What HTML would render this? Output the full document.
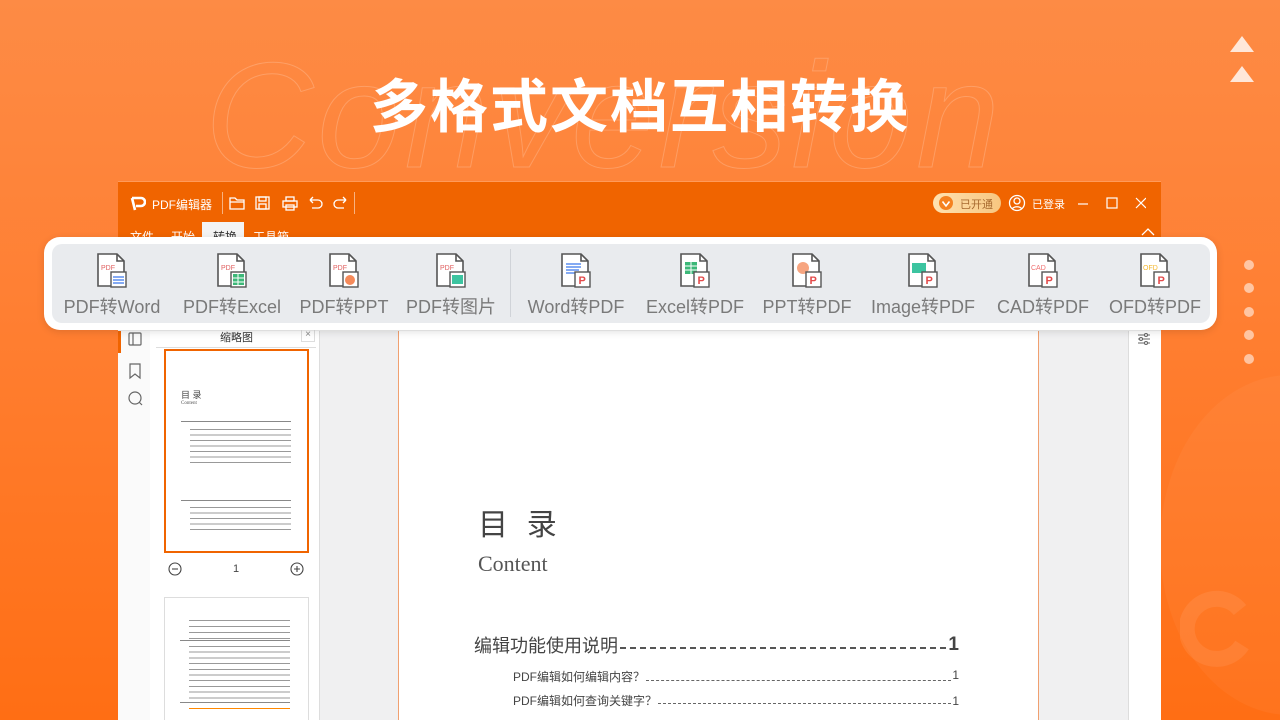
<!DOCTYPE html>
<html style="width:1280px;height:720px;overflow:hidden"><head><meta charset="utf-8"><style>
*{margin:0;padding:0;box-sizing:border-box}
body{width:1280px;height:720px;overflow:hidden;position:relative;font-family:"Liberation Sans","Noto Sans CJK SC",sans-serif;background:linear-gradient(180deg,#fd8b45 0%,#ff8034 40%,#ff6e14 100%)}
.abs{position:absolute}
.title{left:0;width:1280px;top:60px;text-align:center;color:#fff;font-size:58px;font-weight:bold;letter-spacing:2px;font-family:"Noto Sans CJK SC",sans-serif}
.ghost{left:205px;top:40px;font-size:150px;line-height:1;font-style:italic;color:transparent;-webkit-text-stroke:1px rgba(255,255,255,.2);letter-spacing:4px}
.win{left:118px;top:181px;width:1043px;height:539px;background:#f0f0f1;overflow:hidden}
.bar{left:0;top:0;width:1043px;height:60px;background:#f06400;border-top:1px solid #ff9a5a}
.wt{color:#fff;font-size:12px}
.panel{left:44px;top:237px;width:1173px;height:93px;background:#fff;border-radius:16px;box-shadow:0 2px 8px rgba(0,0,0,.12)}
.inner{left:8px;top:7px;width:1158px;height:79px;background:#e9ebee;border-radius:10px}
.it{position:absolute;top:0;width:120px;text-align:center}
.it svg{position:absolute;top:8px;left:43px}
.it span{position:absolute;top:49px;left:0;width:120px;text-align:center;font-size:18px;color:#7a7a7a;white-space:nowrap}
.dot{width:10px;height:10px;border-radius:50%;background:rgba(255,255,255,.55);left:1244px}
.line{height:1px;background:#888;position:absolute}
</style></head><body>
<div class="abs" style="left:0;top:0;width:1280px;height:720px;overflow:hidden">
<div class="abs ghost">Conversion</div>
<div class="abs" style="left:1160px;top:375px;width:260px;height:340px;border-radius:50%;background:rgba(255,255,255,.04)"></div>
<svg class="abs" style="left:1180px;top:590px" width="80" height="80"><path d="M60 20 A30 30 0 1 0 62 55" stroke="rgba(255,255,255,.08)" stroke-width="16" fill="none"/></svg>
<div class="abs title">多格式文档互相转换</div>
<svg class="abs" style="left:1228px;top:34px" width="28" height="52"><polygon points="14,2 26,18 2,18" fill="rgba(255,255,255,.8)"/><polygon points="14,32 26,48 2,48" fill="rgba(255,255,255,.8)"/></svg>
<div class="abs dot" style="top:260px"></div><div class="abs dot" style="top:283px"></div><div class="abs dot" style="top:307px"></div><div class="abs dot" style="top:330px"></div><div class="abs dot" style="top:354px"></div>

<div class="abs win">
 <div class="abs bar">
  <svg class="abs" style="left:12px;top:13px" width="16" height="16"><path d="M2 3 H11 A4 4 0 0 1 11 11 H6 M2 3 L5 15" stroke="#fff" stroke-width="2.6" fill="none"/></svg>
  <div class="abs wt" style="left:34px;top:14px">PDF编辑器</div>
  <div class="abs" style="left:104px;top:10px;width:1px;height:22px;background:rgba(255,255,255,.5)"></div>
  <svg class="abs" style="left:110px;top:12px" width="130" height="18" fill="none" stroke="#fff" stroke-width="1.3">
   <path d="M2 4 H7 L9 6 H16 V15 H2 Z M2 8 H16"/>
   <rect x="28" y="3" width="13" height="12"/><rect x="31" y="3" width="7" height="4"/><rect x="31" y="10" width="7" height="5"/>
   <rect x="55" y="7" width="14" height="6"/><rect x="58" y="3" width="8" height="4"/><rect x="58" y="11" width="8" height="5"/>
   <path d="M82 6 H90 A4 4 0 0 1 90 14 H84 M82 6 L85 3 M82 6 L85 9"/>
   <path d="M118 6 H110 A4 4 0 0 0 110 14 H116 M118 6 L115 3 M118 6 L115 9"/>
  </svg>
  <div class="abs" style="left:236px;top:10px;width:1px;height:22px;background:rgba(255,255,255,.5)"></div>
  <div class="abs" style="left:815px;top:11px;width:68px;height:20px;border-radius:10px;background:linear-gradient(90deg,#ffe2b0,#f7c680)"></div>
  <svg class="abs" style="left:820px;top:13px" width="16" height="16"><circle cx="8" cy="8" r="7" fill="#f58220"/><path d="M4.5 6.5 L8 11 L11.5 6.5" stroke="#fff" stroke-width="1.6" fill="none"/></svg>
  <div class="abs" style="left:842px;top:14px;font-size:11px;color:#a86a30">已开通</div>
  <svg class="abs" style="left:890px;top:12px" width="18" height="18" fill="none" stroke="#fff" stroke-width="1.3"><circle cx="9" cy="9" r="7.5"/><circle cx="9" cy="7" r="3"/><path d="M4 15 A6 5 0 0 1 14 15"/></svg>
  <div class="abs wt" style="left:914px;top:14px;font-size:11px">已登录</div>
  <svg class="abs" style="left:958px;top:14px" width="70" height="14" fill="none" stroke="#fff" stroke-width="1.2"><path d="M2 8 H12"/><rect x="31" y="2" width="10" height="10"/><path d="M60 2 L70 12 M70 2 L60 12"/></svg>
  <div class="abs wt" style="left:12px;top:46px">文件</div>
  <div class="abs wt" style="left:53px;top:46px">开始</div>
  <div class="abs" style="left:84px;top:40px;width:42px;height:20px;background:#f3f3f3"></div>
  <div class="abs" style="left:95px;top:46px;font-size:12px;color:#333">转换</div>
  <div class="abs wt" style="left:135px;top:46px">工具箱</div>
 </div>
 <div class="abs" style="left:0;top:150px;width:32px;height:389px;background:#fafafa"></div>
 <div class="abs" style="left:0;top:150px;width:3px;height:22px;background:#f06400"></div>
 <svg class="abs" style="left:9px;top:150px" width="16" height="80" fill="none" stroke="#666" stroke-width="1.2"><rect x="2" y="2" width="12" height="12" rx="1"/><path d="M6 2 V14"/><path d="M3 33 H13 V47 L8 43 L3 47 Z"/><circle cx="8" cy="67" r="6"/><path d="M12 71 L15 74"/></svg>
 <div class="abs" style="left:32px;top:150px;width:170px;height:389px;background:#fff;border-right:1px solid #ddd"></div>
 <div class="abs" style="left:102px;top:148px;font-size:11px;color:#333">缩略图</div>
 <div class="abs" style="left:183px;top:147px;width:14px;height:14px;border:1px solid #ddd;font-size:10px;color:#888;text-align:center;line-height:12px">×</div>
 <div class="abs" style="left:38px;top:166px;width:160px;height:1px;background:#ddd"></div>
 <div class="abs" style="left:46px;top:168px;width:145px;height:204px;border:2px solid #f06400;background:#fff">
  <div class="abs" style="left:15px;top:37px;font-size:9px;color:#444">目 录</div>
  <div class="abs" style="left:15px;top:50px;font-size:5px;color:#555;font-family:'Liberation Serif'">Content</div>
  <div class="line" style="left:15px;top:70px;width:110px"></div>
  <div class="line" style="left:24px;top:78px;width:101px;height:35px;background:repeating-linear-gradient(#999 0 1px,transparent 1px 5.5px)"></div>
  <div class="line" style="left:15px;top:149px;width:110px"></div>
  <div class="line" style="left:24px;top:156px;width:101px;height:26px;background:repeating-linear-gradient(#999 0 1px,transparent 1px 5.5px)"></div>
 </div>
 <svg class="abs" style="left:50px;top:381px" width="140" height="14" fill="none" stroke="#444" stroke-width="1.1"><circle cx="7" cy="7" r="6"/><path d="M4 7 H10"/><circle cx="129" cy="7" r="6"/><path d="M126 7 H132 M129 4 V10"/></svg>
 <div class="abs" style="left:115px;top:382px;font-size:11px;color:#444">1</div>
 <div class="abs" style="left:46px;top:416px;width:145px;height:123px;border:1px solid #ddd;border-bottom:none;background:#fff">
  <div class="line" style="left:24px;top:22px;width:101px;height:20px;background:repeating-linear-gradient(#999 0 1px,transparent 1px 6px)"></div>
  <div class="line" style="left:15px;top:42px;width:110px"></div>
  <div class="line" style="left:24px;top:48px;width:101px;height:56px;background:repeating-linear-gradient(#999 0 1px,transparent 1px 5.7px)"></div>
  <div class="line" style="left:15px;top:104px;width:110px"></div>
  <div class="line" style="left:24px;top:110px;width:101px;background:#f80"></div>
 </div>
 <div class="abs" style="left:280px;top:150px;width:641px;height:389px;background:#fff;border-left:1px solid #f0a070;border-right:1px solid #f0a070"></div>
 <div class="abs" style="left:360px;top:322px;font-size:30px;line-height:1.3;color:#444;letter-spacing:6px;font-family:'Noto Sans CJK SC',sans-serif">目 录</div>
 <div class="abs" style="left:360px;top:370px;font-size:22px;color:#555;font-family:'Liberation Serif',serif">Content</div>
 <div class="abs" style="left:356px;top:451px;width:485px;font-size:18px;color:#444;display:flex;align-items:center"><span>编辑功能使用说明</span><span style="flex:1;border-bottom:2px dashed #555;margin:0 2px;height:0;position:relative;top:3px"></span><b style="font-size:19px">1</b></div>
 <div class="abs" style="left:395px;top:487px;width:446px;font-size:12px;color:#444;display:flex"><span>PDF编辑如何编辑内容？</span><span style="flex:1;border-bottom:1px dashed #666;margin:0 1px 4px"></span><span>1</span></div>
 <div class="abs" style="left:395px;top:513px;width:446px;font-size:12px;line-height:1.2;color:#444;display:flex"><span>PDF编辑如何查询关键字？</span><span style="flex:1;border-bottom:1px dashed #666;margin:0 1px 4px"></span><span>1</span></div>
 <div class="abs" style="left:1010px;top:150px;width:33px;height:389px;background:#fff;border-left:1px solid #ddd"></div>
 <svg class="abs" style="left:1018px;top:150px" width="16" height="16" fill="none" stroke="#666" stroke-width="1.1"><path d="M2 4 H14 M2 8 H14 M2 12 H14"/><circle cx="10" cy="4" r="1.5" fill="#fff"/><circle cx="5" cy="8" r="1.5" fill="#fff"/><circle cx="10" cy="12" r="1.5" fill="#fff"/></svg>
</div>

<div class="abs panel"><div class="abs inner">
 <div class="abs" style="left:458px;top:5px;width:1px;height:68px;background:#d0d3d8"></div>
 <svg width="0" height="0" style="position:absolute"><defs>
  <g id="doc"><path d="M3 2 H22 L29 9 V34 H3 Z" fill="#fff" stroke="#555" stroke-width="1.6"/><path d="M22 2 V9 H29" fill="none" stroke="#555" stroke-width="1.6"/></g>
  <g id="pb"><rect x="16" y="20" width="15" height="15" fill="#fff" stroke="#555" stroke-width="1.4"/><text x="19.5" y="32" font-size="11" font-weight="bold" fill="#e34b4b" font-family="Liberation Sans">P</text></g>
 </defs></svg>
 <div class="it" style="left:0"><svg width="34" height="38"><use href="#doc"/><text x="6" y="18" font-size="7" fill="#e06060" font-family="Liberation Sans">PDF</text><rect x="16" y="20" width="15" height="15" fill="#fff" stroke="#555" stroke-width="1.4"/><path d="M18 25 H29 M18 28 H29 M18 31 H29" stroke="#5b8def" stroke-width="1.6"/></svg><span>PDF转Word</span></div>
 <div class="it" style="left:120px"><svg width="34" height="38"><use href="#doc"/><text x="6" y="18" font-size="7" fill="#e06060" font-family="Liberation Sans">PDF</text><rect x="16" y="20" width="15" height="15" fill="#fff" stroke="#555" stroke-width="1.4"/><rect x="18" y="22" width="11" height="11" fill="#3cb878"/><path d="M18 26 H29 M18 30 H29 M23 22 V33" stroke="#fff"/></svg><span>PDF转Excel</span></div>
 <div class="it" style="left:232px"><svg width="34" height="38"><use href="#doc"/><text x="6" y="18" font-size="7" fill="#e06060" font-family="Liberation Sans">PDF</text><rect x="16" y="20" width="15" height="15" fill="#fff" stroke="#555" stroke-width="1.4"/><circle cx="23" cy="28" r="5" fill="#f58a5a"/></svg><span>PDF转PPT</span></div>
 <div class="it" style="left:339px"><svg width="34" height="38"><use href="#doc"/><text x="6" y="18" font-size="7" fill="#e06060" font-family="Liberation Sans">PDF</text><rect x="16" y="20" width="15" height="15" fill="#fff" stroke="#555" stroke-width="1.4"/><rect x="18" y="23" width="11" height="9" fill="#3cc4a0"/></svg><span>PDF转图片</span></div>
 <div class="it" style="left:464px"><svg width="34" height="38"><use href="#doc"/><path d="M7 12 H22 M7 15 H22 M7 18 H20 M7 21 H16" stroke="#5b8def" stroke-width="1.6"/><use href="#pb"/></svg><span>Word转PDF</span></div>
 <div class="it" style="left:583px"><svg width="34" height="38"><use href="#doc"/><rect x="7" y="10" width="12" height="12" fill="#3cb878"/><path d="M7 14 H19 M7 18 H19 M13 10 V22" stroke="#fff"/><use href="#pb"/></svg><span>Excel转PDF</span></div>
 <div class="it" style="left:695px"><svg width="34" height="38"><use href="#doc"/><circle cx="13" cy="16" r="6" fill="#f7a580"/><use href="#pb"/></svg><span>PPT转PDF</span></div>
 <div class="it" style="left:811px"><svg width="34" height="38"><use href="#doc"/><rect x="6" y="11" width="14" height="10" fill="#3cc4a0"/><use href="#pb"/></svg><span>Image转PDF</span></div>
 <div class="it" style="left:931px"><svg width="34" height="38"><use href="#doc"/><text x="5" y="18" font-size="7" fill="#f07070" font-family="Liberation Sans">CAD</text><use href="#pb"/></svg><span>CAD转PDF</span></div>
 <div class="it" style="left:1043px"><svg width="34" height="38"><use href="#doc"/><text x="5" y="18" font-size="7" fill="#f5b830" font-family="Liberation Sans">OFD</text><use href="#pb"/></svg><span>OFD转PDF</span></div>
</div></div>
<svg class="abs" style="left:1141px;top:228px" width="14" height="8"><path d="M1 7 L7 1 L13 7" stroke="#fff" fill="none" stroke-width="1.3"/></svg>
</div>
</body></html>
